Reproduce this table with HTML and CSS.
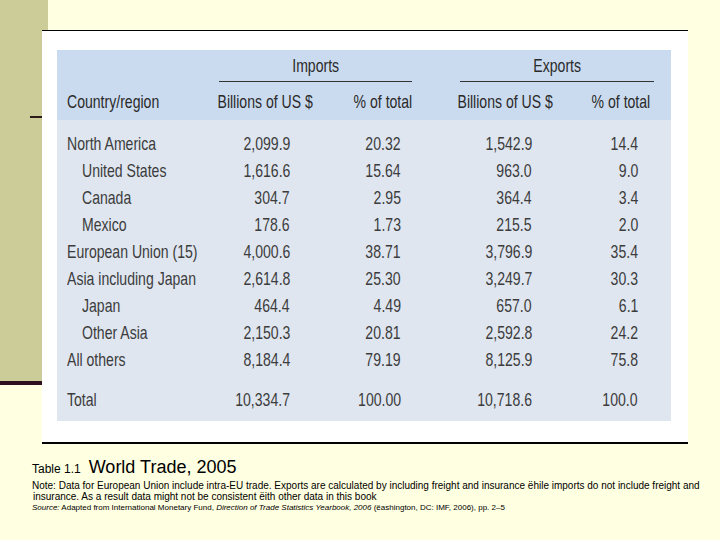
FILE: index.html
```html
<!DOCTYPE html>
<html lang="en">
<head>
<meta charset="utf-8">
<title>World Trade, 2005</title>
<link rel="stylesheet" href="styles.css">
</head>
<body>
<div class="slide">
  <div class="top">
    <div class="rail"></div>
    <figure class="figure">
      <table class="trade">
        <colgroup>
          <col class="c1"><col class="c2"><col class="c3"><col class="c4"><col class="c5">
        </colgroup>
        <thead>
          <tr class="group">
            <th></th>
            <th colspan="2"><div class="grp imp"><span>Imports</span></div></th>
            <th colspan="2"><div class="grp exp"><span>Exports</span></div></th>
          </tr>
          <tr class="cols">
            <th class="region"><span>Country/region</span></th>
            <th><span>Billions of US $</span></th>
            <th><span>% of total</span></th>
            <th><span>Billions of US $</span></th>
            <th class="last"><span>% of total</span></th>
          </tr>
        </thead>
        <tbody>
          <tr class="first"><td><span>North America</span></td><td><span>2,099.9</span></td><td><span>20.32</span></td><td><span>1,542.9</span></td><td><span>14.4</span></td></tr>
          <tr><td class="sub"><span>United States</span></td><td><span>1,616.6</span></td><td><span>15.64</span></td><td><span>963.0</span></td><td><span>9.0</span></td></tr>
          <tr><td class="sub"><span>Canada</span></td><td><span>304.7</span></td><td><span>2.95</span></td><td><span>364.4</span></td><td><span>3.4</span></td></tr>
          <tr><td class="sub"><span>Mexico</span></td><td><span>178.6</span></td><td><span>1.73</span></td><td><span>215.5</span></td><td><span>2.0</span></td></tr>
          <tr><td><span>European Union (15)</span></td><td><span>4,000.6</span></td><td><span>38.71</span></td><td><span>3,796.9</span></td><td><span>35.4</span></td></tr>
          <tr><td><span>Asia including Japan</span></td><td><span>2,614.8</span></td><td><span>25.30</span></td><td><span>3,249.7</span></td><td><span>30.3</span></td></tr>
          <tr><td class="sub"><span>Japan</span></td><td><span>464.4</span></td><td><span>4.49</span></td><td><span>657.0</span></td><td><span>6.1</span></td></tr>
          <tr><td class="sub"><span>Other Asia</span></td><td><span>2,150.3</span></td><td><span>20.81</span></td><td><span>2,592.8</span></td><td><span>24.2</span></td></tr>
          <tr><td><span>All others</span></td><td><span>8,184.4</span></td><td><span>79.19</span></td><td><span>8,125.9</span></td><td><span>75.8</span></td></tr>
          <tr class="total"><td><span>Total</span></td><td><span>10,334.7</span></td><td><span>100.00</span></td><td><span>10,718.6</span></td><td><span>100.0</span></td></tr>
        </tbody>
      </table>
    </figure>
  </div>
  <div class="caption">
    <div class="title"><span class="label">Table 1.1</span><span class="name">World Trade, 2005</span></div>
    <p class="note">Note: Data for European Union include intra-EU trade. Exports are calculated by including freight and insurance ëhile imports do not include freight and</p>
    <p class="note second">insurance. As a result data might not be consistent ëith other data in this book</p>
    <p class="source"><i>Source:</i> Adapted from International Monetary Fund, <i>Direction of Trade Statistics Yearbook, 2006</i> (ëashington, DC: IMF, 2006), pp. 2–5</p>
  </div>
</div>
</body>
</html>
```

FILE: styles.css
```css
* { box-sizing: border-box; }
html, body { margin: 0; padding: 0; }
body {
  background: #ffffe1;
  font-family: "Liberation Sans", Arial, sans-serif;
  color: #000;
}
.slide { width: 720px; height: 540px; overflow: hidden; }

.top { display: flex; align-items: flex-start; }

.rail {
  flex: 0 0 48px;
  height: 385px;
  background: #cccc99;
  border-bottom: 4px solid #2e0f1f;
  position: relative;
}
.rail::after {
  content: "";
  position: absolute;
  left: 30px;
  top: 116px;
  width: 18px;
  height: 2px;
  background: #2b1b1b;
}

.figure {
  position: relative;
  margin: 30px 0 0 -6px;
  width: 646px;
  padding: 19px 16px 21px 15px;
  background: #fff;
  border-top: 1px solid #000;
  border-bottom: 2px solid #000;
}

/* table set in a tall narrow sans: Liberation Sans condensed horizontally */
.trade {
  width: 614px;
  table-layout: fixed;
  border-collapse: collapse;
  border-spacing: 0;
  font-family: "Liberation Sans", Arial, sans-serif;
  font-size: 19px;
  color: #3c3c3c;
}
.trade span {
  display: inline-block;
  transform: scaleX(0.74);
  transform-origin: 100% 50%;
}
.trade td:first-child span,
.trade th.region span { transform-origin: 0 50%; }
.trade .grp span { transform-origin: 50% 50%; }

.trade .c1 { width: 127px; }
.trade .c2 { width: 129px; }
.trade .c3 { width: 99px; }
.trade .c4 { width: 141px; }
.trade .c5 { width: 118px; }

.trade thead { background: #cbdbef; }
.trade tbody { background: #dfe6f0; }

.trade th {
  font-weight: normal;
  padding: 0;
  line-height: 20px;
  text-align: right;
  color: #2a2a2a;
  white-space: nowrap;
}
.group th { padding-top: 6px; }
.grp {
  padding-bottom: 5px;
  border-bottom: 1px solid #333;
  text-align: center;
}
.grp.imp { margin-left: 35px; }
.grp.exp { margin-left: 48px; margin-right: 17px; }

.cols th { padding: 10px 0 8px; }
.cols th.region { text-align: left; padding-left: 10px; }
.cols th.last { padding-right: 21px; }

.trade td {
  padding: 0;
  line-height: 27px;
  text-align: right;
  white-space: nowrap;
}
.trade td:first-child { text-align: left; padding-left: 10px; }
.trade td.sub { padding-left: 25px; }
.trade td:nth-child(2) { padding-right: 23px; }
.trade td:nth-child(3) { padding-right: 11px; }
.trade td:nth-child(4) { padding-right: 21px; }
.trade td:nth-child(5) { padding-right: 33px; }
.trade tr.first td { padding-top: 10px; }
.trade tr.total td { padding-top: 13px; padding-bottom: 8px; }

.caption { padding-left: 32px; }
.title {
  display: flex;
  align-items: baseline;
  gap: 8px;
  margin-top: 14px;
  line-height: 18px;
}
.label { font-size: 12px; }
.name { font-size: 18px; }

.note {
  margin: 2px 0 0;
  font-size: 10px;
  line-height: 11px;
  white-space: nowrap;
}
.note.second { margin-top: 0; padding-left: 1px; }
.source {
  margin: 0;
  font-size: 8px;
  line-height: 11px;
  white-space: nowrap;
}
```
